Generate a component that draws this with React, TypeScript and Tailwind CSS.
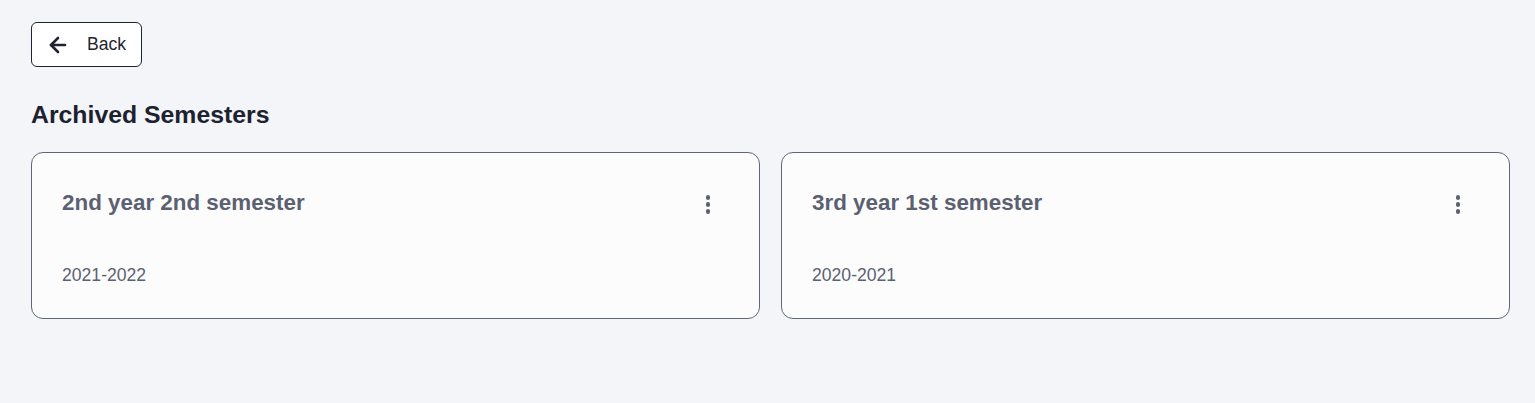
import { ArrowLeft } from 'lucide-react';

const SEMESTERS = [
  { title: '2nd year 2nd semester', years: '2021-2022' },
  { title: '3rd year 1st semester', years: '2020-2021' },
];

function Kebab() {
  return (
    <button className="flex flex-col items-center gap-[2.5px] px-2 py-1">
      <span className="w-[4.5px] h-[4.5px] rounded-full bg-[#5b6170]" />
      <span className="w-[4.5px] h-[4.5px] rounded-full bg-[#5b6170]" />
      <span className="w-[4.5px] h-[4.5px] rounded-full bg-[#5b6170]" />
    </button>
  );
}

function SemesterCard({ semester }: { semester: (typeof SEMESTERS)[0] }) {
  return (
    <div className="h-[167px] rounded-[12px] border border-[#5f6675] bg-[#fcfcfd] pl-[30px] pr-[41px] pt-[34px]">
      <div className="flex items-start justify-between">
        <h3 className="text-[22.4px] leading-[32px] font-bold text-[#5b6170]">{semester.title}</h3>
        <div className="mt-[4px]">
          <Kebab />
        </div>
      </div>
      <p className="mt-[44px] text-[17.6px] leading-[24px] text-[#5b6170]">{semester.years}</p>
    </div>
  );
}

export default function App() {
  return (
    <div
      className="min-h-[403px] bg-[#f4f5f9] pl-[31px] pr-[25px] pt-[22px]"
      style={{ fontFamily: '"Liberation Sans", Arial, sans-serif' }}
    >
      <button className="flex h-[45px] w-[111px] items-center rounded-[6px] border border-[#1f2430] bg-white pl-[14px] text-[17.6px] text-[#1f2430]">
        <ArrowLeft size={24} strokeWidth={2.6} />
        <span className="ml-[17px]">Back</span>
      </button>

      <h2 className="mt-[33px] text-[24.8px] leading-[30px] font-bold text-[#1c2230]">Archived Semesters</h2>

      <div className="mt-[22px] grid grid-cols-2 gap-[21px]">
        {SEMESTERS.map((s) => (
          <SemesterCard key={s.title} semester={s} />
        ))}
      </div>
    </div>
  );
}
